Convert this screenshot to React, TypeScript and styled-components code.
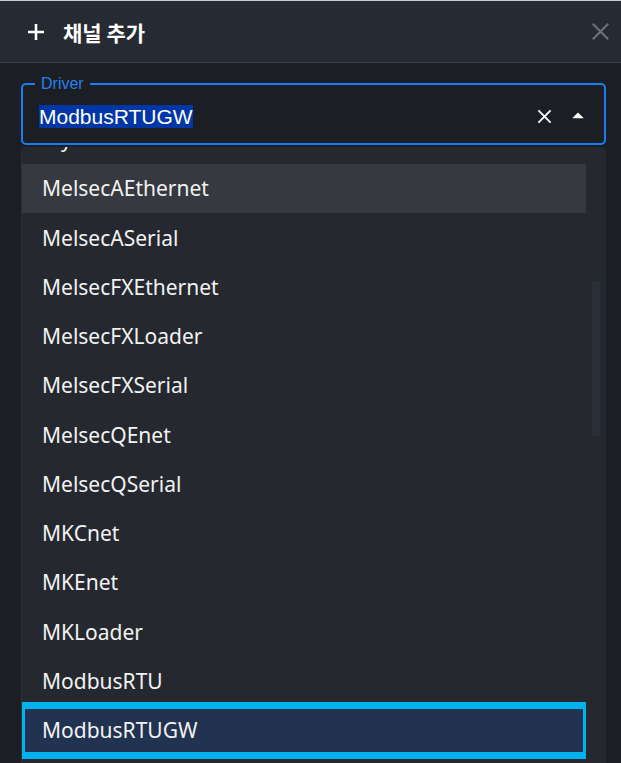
import React, { useLayoutEffect, useRef } from "react";
import styled, { createGlobalStyle } from "styled-components";

const GlobalStyle = createGlobalStyle`
  html, body {
    margin: 0;
    height: 100%;
    overflow: hidden;
    background: #1b1e24;
  }
  * { box-sizing: border-box; }
`;

const drivers = [
  "FEnet",
  "Hitachi",
  "Mycom",
  "MelsecAEthernet",
  "MelsecASerial",
  "MelsecFXEthernet",
  "MelsecFXLoader",
  "MelsecFXSerial",
  "MelsecQEnet",
  "MelsecQSerial",
  "MKCnet",
  "MKEnet",
  "MKLoader",
  "ModbusRTU",
  "ModbusRTUGW",
  "ModbusTCP",
  "ModbusTCPGW",
  "OmronFins",
];

const ROW_H = 49.25;
const HOVERED = "MelsecAEthernet";
const SELECTED = "ModbusRTUGW";

const PlusIcon = () => (
  <svg width="18" height="18" viewBox="0 0 18 18">
    <path d="M9 1v16M1 9h16" stroke="#fff" strokeWidth="2.6" />
  </svg>
);

const CloseIcon = ({ size, color, weight }: { size: number; color: string; weight: number }) => (
  <svg width={size} height={size} viewBox="0 0 16 16">
    <path d="M1.5 1.5l13 13M14.5 1.5l-13 13" stroke={color} strokeWidth={weight} />
  </svg>
);

const ArrowUp = () => (
  <svg width="28" height="28" viewBox="0 0 24 24">
    <path d="M7 14l5-5 5 5z" fill="#fff" />
  </svg>
);

const App = () => {
  const listRef = useRef<HTMLUListElement>(null);

  useLayoutEffect(() => {
    // list is scrolled so the hovered row sits just under the field
    const idx = drivers.indexOf(HOVERED);
    if (listRef.current) listRef.current.scrollTop = idx * ROW_H - 17;
  }, []);

  return (
    <Page>
      <GlobalStyle />
      <Header>
        <PlusIcon />
        <Title>채널 추가</Title>
        <CloseButton>
          <CloseIcon size={19} color="#6c7079" weight={1.8} />
        </CloseButton>
      </Header>
      <Body>
        <Field>
          <Legend>Driver</Legend>
          <ValueRow>
            <Value>{SELECTED}</Value>
            <IconButton>
              <CloseIcon size={15} color="#fff" weight={2} />
            </IconButton>
            <ArrowUp />
          </ValueRow>
        </Field>
        <Panel>
          <List ref={listRef}>
            {drivers.map((d) => (
              <Option key={d} $hover={d === HOVERED} $selected={d === SELECTED}>
                {d}
              </Option>
            ))}
          </List>
          <Track>
            <Thumb />
          </Track>
        </Panel>
      </Body>
    </Page>
  );
};

export default App;

const Page = styled.div`
  height: 100vh;
  background: #1b1e24;
  overflow: hidden;
`;

const Header = styled.header`
  height: 63px;
  display: flex;
  align-items: center;
  gap: 18px;
  padding: 0 11px 0 27px;
  background: #262a33;
  border-top: 1px solid #c9ccd0;
  border-bottom: 1px solid #3a3f49;
`;

const Title = styled.h1`
  flex: 1;
  margin: 0;
  font-family: "Noto Sans CJK KR", "Noto Sans", sans-serif;
  font-size: 21px;
  font-weight: 700;
  color: #fff;
`;

const CloseButton = styled.span`
  display: flex;
  align-items: center;
`;

const Body = styled.main`
  padding: 12px 15px 0 21px;
`;

const Field = styled.fieldset`
  margin: 0;
  padding: 0 12px 3px 12px;
  border: 2px solid #1a7cf2;
  border-radius: 5px;
  min-width: 0;
`;

const Legend = styled.legend`
  padding: 0 6px;
  font-family: "Liberation Sans", Arial, sans-serif;
  font-size: 16px;
  line-height: 17px;
  color: #2a80ec;
`;

const ValueRow = styled.div`
  height: 48px;
  padding-left: 4px;
  display: flex;
  align-items: center;
  gap: 12px;
`;

const Value = styled.span`
  margin-right: auto;
  font-family: "Liberation Sans", Arial, sans-serif;
  font-size: 21px;
  line-height: 23px;
  color: #fff;
  background: #0036a6;
`;

const IconButton = styled.span`
  display: flex;
  align-items: center;
`;

const Panel = styled.div`
  margin-top: 2px;
  display: flex;
  background: #25282f;
  border-radius: 4px 4px 0 0;
  border-left: 1px solid #2b2f37;
  height: 640px;
  overflow: hidden;
`;

const List = styled.ul`
  flex: 1;
  margin: 0;
  padding: 0;
  list-style: none;
  overflow-y: scroll;
  scrollbar-width: none;
`;

const Option = styled.li<{ $hover?: boolean; $selected?: boolean }>`
  height: ${ROW_H}px;
  display: flex;
  align-items: center;
  padding-left: 20px;
  font-family: "Noto Sans", sans-serif;
  font-size: 21px;
  color: #f2f2f2;
  background: ${(p) => (p.$selected ? "#213350" : p.$hover ? "#36393f" : "transparent")};
  outline: ${(p) => (p.$selected ? "7px solid #00b2ee" : "none")};
  outline-offset: -3px;
`;

const Track = styled.div`
  width: 20px;
  padding: 134px 6px 0 6px;
`;

const Thumb = styled.div`
  height: 155px;
  background: #29303a;
  border-radius: 2px;
`;
